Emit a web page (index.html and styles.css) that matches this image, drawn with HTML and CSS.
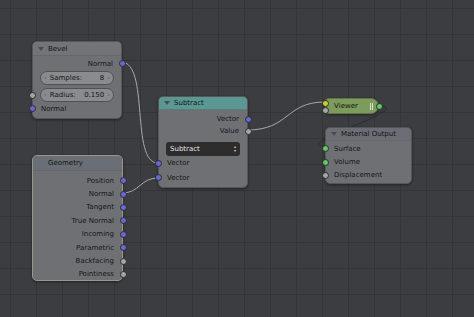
FILE: index.html
```html
<!DOCTYPE html>
<html>
<head>
<meta charset="utf-8">
<link rel="stylesheet" href="styles.css">
</head>
<body>
<div class="canvas">
  <svg class="wires" width="474" height="317" viewBox="0 0 474 317">
    <path d="M378 106 C 420 106, 290 146, 324 146" class="wire dark"/>
    <path d="M121 62 C 150 62, 130 163, 158 163" class="wire"/>
    <path d="M122 193 C 140 193, 140 178, 158 178" class="wire"/>
    <path d="M247 130 C 290 130, 285 102, 325 102" class="wire"/>
  </svg>

  <div class="node bevel">
    <div class="head"><span class="tri"></span>Bevel</div>
    <div class="body">
      <div class="row out">Normal<span class="sock purple r"></span></div>
      <div class="field"><span class="arr">‹</span><span class="lab">Samples:</span><span class="val">8</span><span class="arr">›</span></div>
      <div class="field f2"><span class="sock gray l"></span><span class="arr">‹</span><span class="lab">Radius:</span><span class="val">0.150</span><span class="arr">›</span></div>
      <div class="row in"><span class="sock purple l"></span>Normal</div>
    </div>
  </div>

  <div class="node subtract">
    <div class="head"><span class="tri"></span>Subtract</div>
    <div class="body">
      <div class="row out">Vector<span class="sock purple r"></span></div>
      <div class="row out">Value<span class="sock gray r"></span></div>
      <div class="drop"><span>Subtract</span><span class="ud">▴<br>▾</span></div>
      <div class="row in tall"><span class="sock purple l"></span>Vector</div>
      <div class="row in tall"><span class="sock purple l"></span>Vector</div>
    </div>
  </div>

  <div class="node geometry">
    <div class="head"><span class="tri"></span>Geometry</div>
    <div class="body">
      <div class="row out">Position<span class="sock purple r"></span></div>
      <div class="row out">Normal<span class="sock purple r"></span></div>
      <div class="row out">Tangent<span class="sock purple r"></span></div>
      <div class="row out">True Normal<span class="sock purple r"></span></div>
      <div class="row out">Incoming<span class="sock purple r"></span></div>
      <div class="row out">Parametric<span class="sock purple r"></span></div>
      <div class="row out">Backfacing<span class="sock gray r"></span></div>
      <div class="row out">Pointiness<span class="sock gray r"></span></div>
    </div>
  </div>

  <div class="viewer">
    <span class="sock yellow vy"></span>
    <span class="sock gray vg"></span>
    <span class="vtext">Viewer</span>
    <span class="bars"></span>
    <span class="sock green vo"></span>
  </div>

  <div class="node matout">
    <div class="head"><span class="tri"></span>Material Output</div>
    <div class="body">
      <div class="row in"><span class="sock green l"></span>Surface</div>
      <div class="row in"><span class="sock green l"></span>Volume</div>
      <div class="row in"><span class="sock gray l"></span>Displacement</div>
    </div>
  </div>
</div>
</body>
</html>
```

FILE: styles.css
```css
html, body {
  margin: 0;
  padding: 0;
}
body {
  width: 474px;
  height: 317px;
  overflow: hidden;
  font-family: "DejaVu Sans", sans-serif;
  font-size: 7px;
  color: #161616;
}
.canvas {
  position: relative;
  width: 474px;
  height: 317px;
  background-color: #3c3d41;
  background-image:
    linear-gradient(to right, #343539 1px, transparent 1px),
    linear-gradient(to bottom, #343539 1px, transparent 1px);
  background-size: 26px 26px;
  background-position: 10px 8px;
}
.wires {
  position: absolute;
  left: 0;
  top: 0;
}
.wire {
  fill: none;
  stroke: #a9a9ab;
  stroke-width: 1;
}
.wire.dark {
  stroke: #2b2c2f;
}
.node {
  position: absolute;
  box-sizing: border-box;
  background: #6f7074;
  border-radius: 5px;
  box-shadow: 0 1px 3px rgba(0,0,0,0.45);
  border: 1px solid #55565a;
}
.head {
  display: flex;
  align-items: center;
  gap: 4px;
  background: #737478;
  border-radius: 4px 4px 0 0;
  padding-left: 5px;
  color: #121212;
  border-bottom: 1px solid #66676a;
}
.tri {
  width: 0;
  height: 0;
  border-left: 3px solid transparent;
  border-right: 3px solid transparent;
  border-top: 4px solid #4a4b4f;
}
.body {
  display: flex;
  flex-direction: column;
}
.row {
  position: relative;
  display: flex;
  align-items: center;
  height: 13px;
  padding: 0 8px;
}
.row.out {
  justify-content: flex-end;
}
.row.in {
  justify-content: flex-start;
}
.sock {
  position: absolute;
  width: 5px;
  height: 5px;
  border-radius: 50%;
  border: 1px solid #2a2a2e;
  top: 50%;
  margin-top: -3.5px;
}
.sock.r { right: -4.5px; }
.sock.l { left: -4.5px; }
.purple { background: #6868d2; }
.gray { background: #a5a5a5; }
.green { background: #62c962; }
.yellow { background: #cccc2e; }

/* Bevel */
.bevel {
  left: 32px;
  top: 41px;
  width: 90px;
  height: 78px;
}
.bevel .head { height: 13px; }
.bevel .body { padding-top: 1px; }
.field {
  position: relative;
  display: flex;
  align-items: center;
  margin: 1px 7px 0 7px;
  height: 12px;
  border-radius: 7px;
  background: #8a8b8e;
  border: 1px solid #505155;
  padding: 0 3px;
  color: #151515;
}
.field.f2 { margin-top: 3px; }
.field .sock.l { left: -12.5px; }
.field .lab { flex: 1; padding-left: 3px; }
.field .val { padding-right: 3px; }
.arr { color: #5a5b5e; font-size: 7px; }

/* Subtract */
.subtract {
  left: 158px;
  top: 96px;
  width: 90px;
  height: 92px;
}
.subtract .head {
  height: 12px;
  background: #5c9893;
  border-bottom-color: #557e7a;
}
.subtract .body { padding-top: 3px; }
.subtract .row { height: 12px; }
.subtract .row.tall { height: 14.5px; }
.drop {
  display: flex;
  align-items: center;
  justify-content: space-between;
  margin: 5px 7px 0 7px;
  height: 14px;
  box-sizing: border-box;
  background: #2d2d2e;
  border-radius: 3px;
  color: #e6e6e6;
  padding: 0 4px;
}
.ud {
  font-size: 4px;
  line-height: 4px;
  color: #cfcfcf;
  text-align: center;
}

/* Geometry */
.geometry {
  left: 32px;
  top: 155px;
  width: 91px;
  height: 126px;
  border-color: #9c968a;
}
.geometry .head {
  height: 14px;
  background: #6a6f77;
  padding-left: 15px;
}
.geometry .head .tri { display: none; }
.geometry .body { padding-top: 3px; }
.geometry .row { height: 13.4px; }

/* Viewer */
.viewer {
  position: absolute;
  left: 325px;
  top: 98px;
  width: 54px;
  height: 16px;
  box-sizing: border-box;
  background: #7d9b5c;
  border: 1px solid #5e7447;
  border-radius: 4px 9px 9px 4px;
  display: flex;
  align-items: center;
  box-shadow: 0 1px 3px rgba(0,0,0,0.45);
}
.vtext {
  flex: 1;
  text-align: center;
  padding-right: 4px;
  color: #141414;
}
.bars {
  width: 3px;
  height: 7px;
  margin-right: 5px;
  border-left: 1px solid #d6dfcc;
  border-right: 1px solid #d6dfcc;
  box-sizing: border-box;
}
.viewer .sock { top: auto; margin-top: 0; }
.vy { left: -4.5px; top: 0.5px !important; }
.vg { left: -4.5px; top: 8px !important; }
.vo { right: -4.5px; top: 4px !important; }

/* Material Output */
.matout {
  left: 325px;
  top: 127px;
  width: 87px;
  height: 57px;
}
.matout .head {
  height: 12px;
  background: #6c6e76;
}
.matout .body { padding-top: 1px; }
.matout .row { height: 13.4px; }
```
